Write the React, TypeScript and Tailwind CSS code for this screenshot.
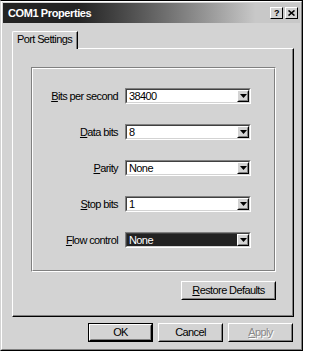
import type { ReactNode } from "react"

const rows = [
  { key: "B", rest: "its per second", value: "38400" },
  { key: "D", rest: "ata bits", value: "8" },
  { key: "P", rest: "arity", value: "None" },
  { key: "S", rest: "top bits", value: "1" },
  { key: "F", rest: "low control", value: "None", selected: true },
]

function Key({ children }: { children: ReactNode }) {
  return <span className="underline decoration-1 underline-offset-[1px]">{children}</span>
}

function ArrowButton() {
  return (
    <div className="h-full w-[12px] border border-t-white border-l-white border-r-black border-b-black bg-[#d3d3d3]">
      <div className="flex h-full w-full items-center justify-center border border-transparent border-r-[#808080] border-b-[#808080]">
        <svg width="7" height="4" viewBox="0 0 7 4">
          <polygon points="0,0 7,0 3.5,4" fill="#000" />
        </svg>
      </div>
    </div>
  )
}

function Combo({ value, selected }: { value: string; selected?: boolean }) {
  return (
    <div className="h-[16px] w-[126px] border border-t-[#808080] border-l-[#808080] border-r-white border-b-white">
      <div className="flex h-full w-full border border-t-[#404040] border-l-[#404040] border-r-[#d3d3d3] border-b-[#d3d3d3] bg-white">
        <div
          className={
            selected
              ? "flex h-full flex-1 items-center bg-[#222222] pl-[2px] text-white"
              : "flex h-full flex-1 items-center pl-[2px] text-black"
          }
        >
          {value}
        </div>
        <ArrowButton />
      </div>
    </div>
  )
}

function Button({
  children,
  width,
  isDefault,
  disabled,
}: {
  children: ReactNode
  width: string
  isDefault?: boolean
  disabled?: boolean
}) {
  const face = (
    <div className="h-full w-full border border-t-white border-l-white border-r-black border-b-black">
      <div
        className={
          disabled
            ? "flex h-full w-full items-center justify-center border border-transparent border-r-[#808080] border-b-[#808080] text-[#8a8a8a] [text-shadow:1px_1px_0_#fff]"
            : "flex h-full w-full items-center justify-center border border-transparent border-r-[#808080] border-b-[#808080] text-black"
        }
      >
        {children}
      </div>
    </div>
  )
  return (
    <div className={`${width} h-[19px] ${isDefault ? "border border-black" : ""}`}>{face}</div>
  )
}

export default function App() {
  return (
    <div className="h-[356px] w-[307px] bg-white font-['Liberation_Sans',Arial,sans-serif] text-[11px] leading-none tracking-[-0.6px] text-black">
      <div className="h-[351px] w-[303px] border border-t-black border-l-[#d3d3d3] border-r-black border-b-black">
        <div className="h-full w-full border border-t-white border-l-white border-r-[#808080] border-b-[#808080] bg-[#d3d3d3] p-px">
          {/* title bar */}
          <div className="flex h-[20px] items-center justify-between bg-linear-to-r from-[#232323] from-25% to-[#c8c8c8] to-85% pl-[5px] pr-[2px]">
            <span className="text-[11px] font-bold tracking-[-0.4px] text-white">COM1 Properties</span>
            <div className="flex gap-[2px]">
              <div className="flex h-[12px] w-[13px] items-center justify-center border border-t-white border-l-white border-r-black border-b-black bg-[#d3d3d3] text-[9px] font-bold">
                ?
              </div>
              <div className="flex h-[12px] w-[13px] items-center justify-center border border-t-white border-l-white border-r-black border-b-black bg-[#d3d3d3]">
                <svg width="7" height="6" viewBox="0 0 7 6">
                  <path d="M0.5 0.5 L6.5 5.5 M6.5 0.5 L0.5 5.5" stroke="#000" strokeWidth="1.6" />
                </svg>
              </div>
            </div>
          </div>

          {/* tabs */}
          <div className="ml-[9px] mt-[8px] w-[282px]">
            <div className="relative z-10 -mb-px flex h-[18px] w-[66px] items-center justify-center rounded-tl-[2px] border border-b-0 border-t-white border-l-white border-r-black bg-[#d3d3d3]">
              <div className="flex h-full w-full items-center justify-center border-r border-r-[#808080] pb-[2px]">
                Port Settings
              </div>
            </div>
            <div className="h-[269px] w-[282px] border border-t-white border-l-white border-r-black border-b-black">
              <div className="h-full w-full border-r border-b border-r-[#808080] border-b-[#808080] pl-[18px] pr-[15px] pt-[18px]">
                <div className="h-[205px] w-[245px] border border-t-[#808080] border-l-[#808080] border-r-white border-b-white">
                  <div className="flex h-full w-full flex-col gap-[20px] border border-t-white border-l-white border-r-[#808080] border-b-[#808080] pt-[19px]">
                    {rows.map((r) => (
                      <div key={r.key} className="flex items-center gap-[7px]">
                        <div className="w-[85px] text-right">
                          <Key>{r.key}</Key>
                          {r.rest}
                        </div>
                        <Combo value={r.value} selected={r.selected} />
                      </div>
                    ))}
                  </div>
                </div>
                <div className="mt-[9px] flex w-[245px] justify-end">
                  <Button width="w-[95px]">
                    <Key>R</Key>estore Defaults
                  </Button>
                </div>
              </div>
            </div>
          </div>

          {/* dialog buttons */}
          <div className="mt-[6px] flex w-[290px] justify-end gap-[5px]">
            <Button width="w-[65px]" isDefault>
              OK
            </Button>
            <Button width="w-[65px]">Cancel</Button>
            <Button width="w-[65px]" disabled>
              <Key>A</Key>pply
            </Button>
          </div>
        </div>
      </div>
    </div>
  )
}
